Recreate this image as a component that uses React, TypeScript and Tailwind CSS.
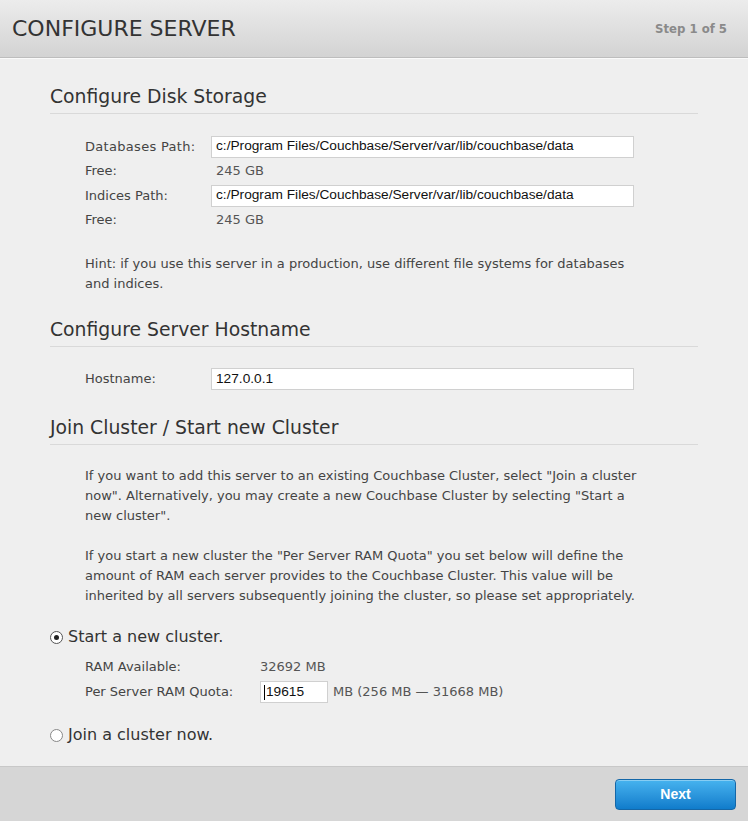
import React from "react";

const verd = { fontFamily: '"DejaVu Sans", Verdana, sans-serif' };
const arial = { fontFamily: '"Liberation Sans", Arial, sans-serif' };

function Heading({ children }: { children: React.ReactNode }) {
  return (
    <div className="border-b border-[#d9d9d9] pb-[4px] ml-[50px] mr-[50px]">
      <h2 className="text-[18.8px] leading-[24px] text-[#333]" style={verd}>
        {children}
      </h2>
    </div>
  );
}

function TextInput({ value, w }: { value: string; w: string }) {
  return (
    <div
      className={`${w} h-[22px] bg-white border border-[#d0d0d0] flex items-center pl-[4px] text-[13.7px] text-[#111]`}
      style={arial}
    >
      {value}
    </div>
  );
}

export default function App() {
  return (
    <div className="w-[748px] h-[821px] bg-[#efefef] flex flex-col overflow-hidden">
      <div className="h-[58px] shrink-0 bg-gradient-to-b from-[#ececec] to-[#d3d3d3] border-b border-[#bdbdbd] flex items-center justify-between px-[12px] shadow-[0_1px_0_#fafafa]">
        <div className="text-[22px] text-[#333]" style={verd}>
          CONFIGURE SERVER
        </div>
        <div className="text-[13px] font-bold text-[#8a8a8a] mr-[9px]" style={{ fontFamily: '"DejaVu Sans Condensed", "DejaVu Sans", sans-serif' }}>
          Step 1 of 5
        </div>
      </div>

      <div className="flex-1 flex flex-col">
        <div className="h-[27px]" />
        <Heading>Configure Disk Storage</Heading>
        <div className="ml-[85px] mt-[20px] text-[13px] text-[#444]" style={verd}>
          <div className="flex items-center h-[25px]">
            <div className="w-[126px] tracking-[0.3px]">Databases Path:</div>
            <TextInput value="c:/Program Files/Couchbase/Server/var/lib/couchbase/data" w="w-[423px]" />
          </div>
          <div className="flex items-center h-[24px]">
            <div className="w-[131px]">Free:</div>
            <div className="text-[#555]">245 GB</div>
          </div>
          <div className="flex items-center h-[25px]">
            <div className="w-[126px]">Indices Path:</div>
            <TextInput value="c:/Program Files/Couchbase/Server/var/lib/couchbase/data" w="w-[423px]" />
          </div>
          <div className="flex items-center h-[24px]">
            <div className="w-[131px]">Free:</div>
            <div className="text-[#555]">245 GB</div>
          </div>
        </div>
        <div className="ml-[85px] mr-[100px] mt-[22px] text-[13px] leading-[20px] text-[#444]" style={verd}>
          Hint: if you use this server in a production, use different file systems for databases and indices.
        </div>

        <div className="h-[24px]" />
        <Heading>Configure Server Hostname</Heading>
        <div className="ml-[85px] mt-[20px] text-[13px] text-[#444]" style={verd}>
          <div className="flex items-center h-[24px]">
            <div className="w-[126px]">Hostname:</div>
            <TextInput value="127.0.0.1" w="w-[423px]" />
          </div>
        </div>

        <div className="h-[25px]" />
        <Heading>Join Cluster / Start new Cluster</Heading>
        <div className="ml-[85px] mr-[100px] mt-[21px] text-[13px] leading-[20px] text-[#444]" style={verd}>
          <p>
            If you want to add this server to an existing Couchbase Cluster, select "Join a cluster now". Alternatively, you may create a new Couchbase Cluster by selecting "Start a new cluster".
          </p>
          <p className="mt-[20px]">
            If you start a new cluster the "Per Server RAM Quota" you set below will define the amount of RAM each server provides to the Couchbase Cluster. This value will be inherited by all servers subsequently joining the cluster, so please set appropriately.
          </p>
        </div>

        <div className="ml-[50px] mt-[21px] flex items-center h-[20px] text-[16px] text-[#333]" style={verd}>
          <span className="w-[13px] h-[13px] rounded-full border border-[#555] bg-white flex items-center justify-center mr-[5px]">
            <span className="w-[5px] h-[5px] rounded-full bg-[#222]" />
          </span>
          Start a new cluster.
        </div>
        <div className="ml-[85px] mt-[10px] text-[13px] text-[#444]" style={verd}>
          <div className="flex items-center h-[20px]">
            <div className="w-[175px]">RAM Available:</div>
            <div className="text-[#555]">32692 MB</div>
          </div>
          <div className="flex items-center h-[30px]">
            <div className="w-[175px]">Per Server RAM Quota:</div>
            <div
              className="w-[68px] h-[22px] bg-white border border-[#d0d0d0] flex items-center pl-[3px] text-[13.7px] text-[#111]"
              style={arial}
            >
              <span className="w-[1px] h-[15px] bg-black mr-[1px]" />
              19615
            </div>
            <div className="ml-[5px] text-[#555]">MB (256 MB — 31668 MB)</div>
          </div>
        </div>
        <div className="ml-[50px] mt-[18px] flex items-center h-[20px] text-[16px] text-[#333]" style={verd}>
          <span className="w-[13px] h-[13px] rounded-full border border-[#888] bg-white mr-[5px]" />
          Join a cluster now.
        </div>
      </div>

      <div className="h-[55px] shrink-0 bg-[#d6d6d6] border-t border-[#c8c8c8] flex items-center justify-end pr-[12px]">
        <button
          className="w-[121px] h-[31px] rounded-[4px] border border-[#1467a8] bg-gradient-to-b from-[#46b3ef] to-[#0f7ccb] text-white text-[14px] font-bold shadow-[inset_0_1px_0_rgba(255,255,255,0.35)]"
          style={arial}
        >
          Next
        </button>
      </div>
    </div>
  );
}
